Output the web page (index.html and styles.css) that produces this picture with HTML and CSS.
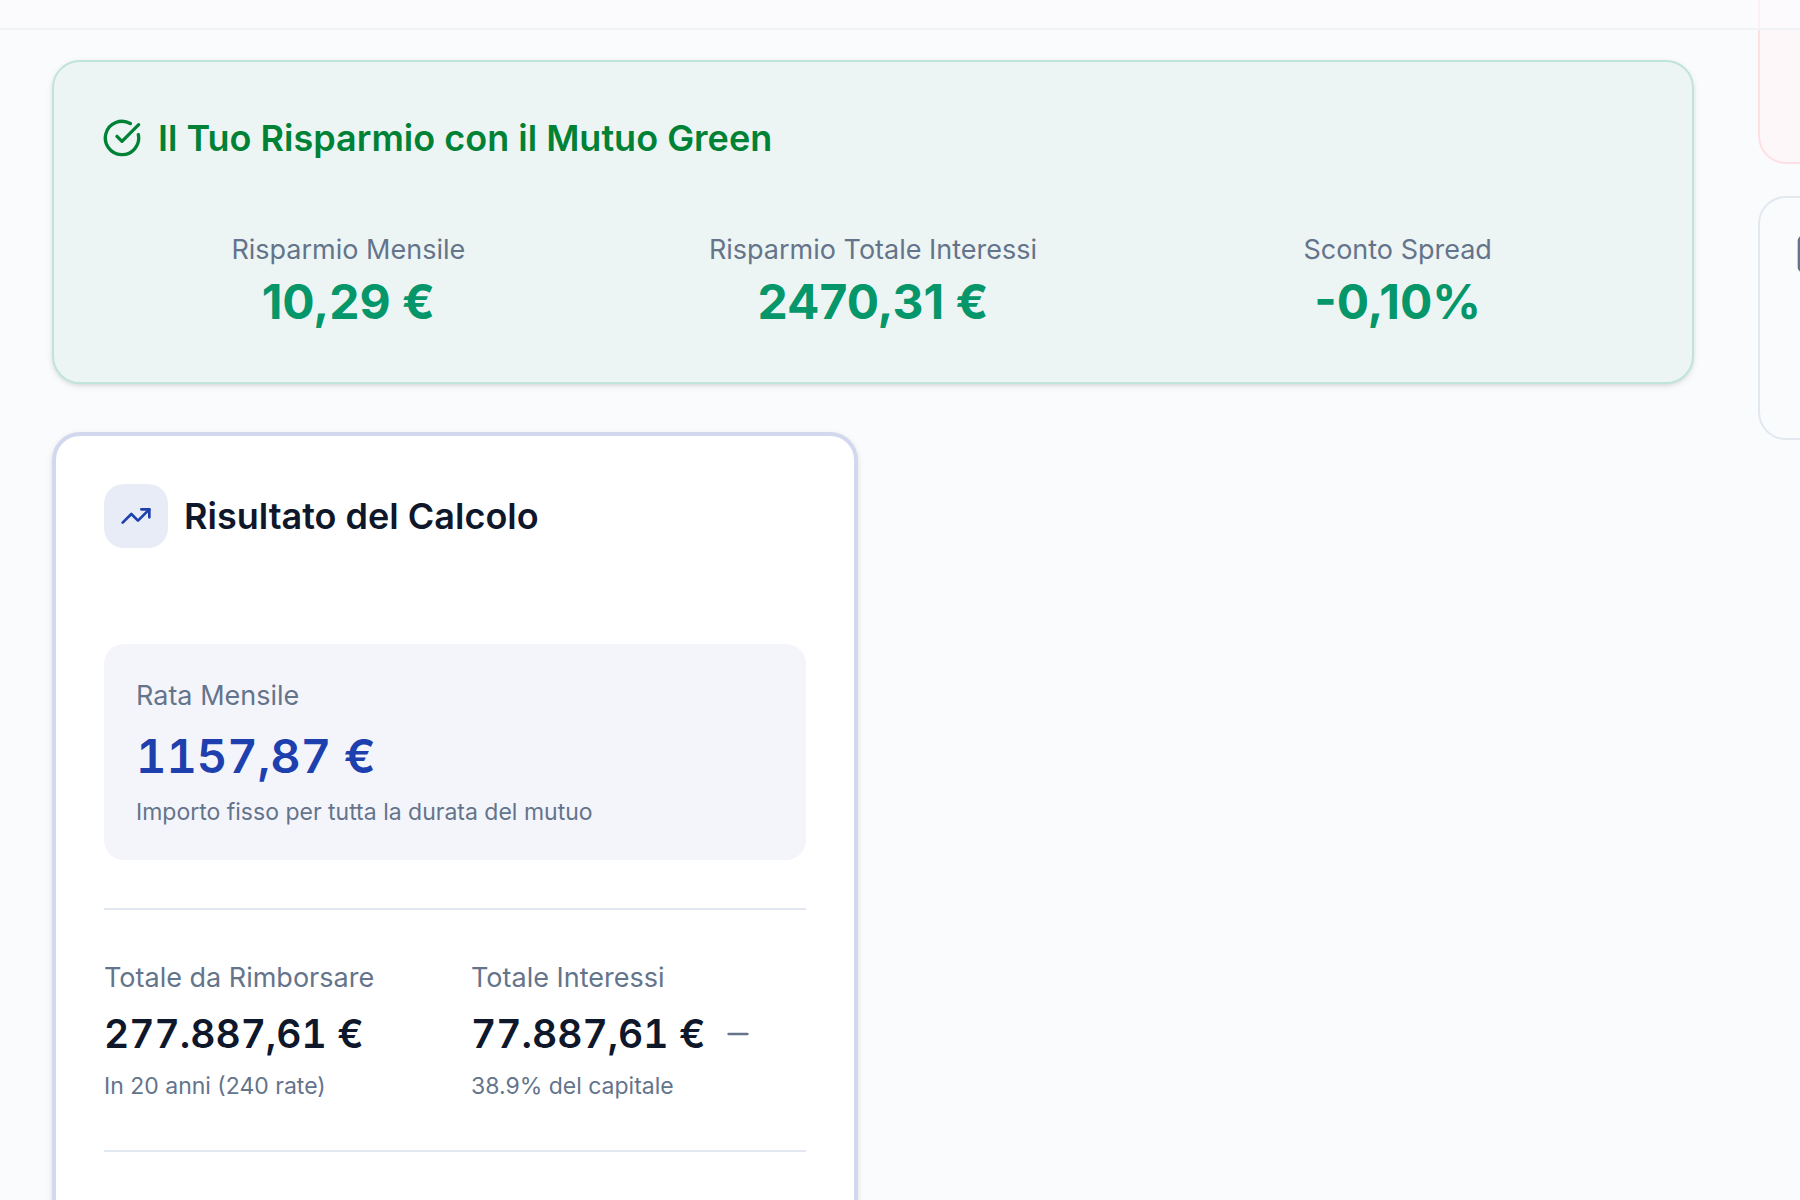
FILE: index.html
```html
<!DOCTYPE html>
<html lang="it">
<head>
    <meta charset="UTF-8">
    <meta name="viewport" content="width=device-width, initial-scale=1.0">
    <title>Calcolo Mutuo</title>
    <link rel="stylesheet" href="styles.css">
</head>
<body>
    <header class="topbar"></header>

    <div class="layout">
        <main class="content">
            <!-- Risparmio mutuo green -->
            <section class="card savings">
                <h2 class="card-title savings-title">
                    <svg class="icon-lg" viewBox="0 0 24 24" aria-hidden="true">
                        <path d="M21.801 10A10 10 0 1 1 17 3.335"/>
                        <path d="m9 11 3 3L22 4"/>
                    </svg>
                    Il Tuo Risparmio con il Mutuo Green
                </h2>
                <div class="savings-grid">
                    <div>
                        <p class="label">Risparmio Mensile</p>
                        <p class="saving">10,29 €</p>
                    </div>
                    <div>
                        <p class="label">Risparmio Totale Interessi</p>
                        <p class="saving">2470,31 €</p>
                    </div>
                    <div>
                        <p class="label">Sconto Spread</p>
                        <p class="saving">-0,10%</p>
                    </div>
                </div>
            </section>

            <!-- Risultato -->
            <div class="results">
                <section class="card result">
                    <h2 class="card-title">
                        <span class="badge">
                            <svg class="icon" viewBox="0 0 24 24" aria-hidden="true">
                                <path d="M16 7h6v6"/>
                                <path d="m22 7-8.5 8.5-5-5L2 17"/>
                            </svg>
                        </span>
                        Risultato del Calcolo
                    </h2>
                    <div class="payment">
                        <p class="label">Rata Mensile</p>
                        <p class="payment-value">1157,87 €</p>
                        <p class="note">Importo fisso per tutta la durata del mutuo</p>
                    </div>
                    <hr>
                    <div class="totals">
                        <div>
                            <p class="label">Totale da Rimborsare</p>
                            <p class="total">277.887,61 €</p>
                            <p class="note">In 20 anni (240 rate)</p>
                        </div>
                        <div>
                            <p class="label">Totale Interessi</p>
                            <p class="total">
                                77.887,61 €
                                <svg class="icon muted" viewBox="0 0 24 24" aria-hidden="true">
                                    <path d="M5 12h14"/>
                                </svg>
                            </p>
                            <p class="note">38.9% del capitale</p>
                        </div>
                    </div>
                    <hr>
                </section>
            </div>
        </main>

        <aside class="sidebar">
            <div class="side-card warning"></div>
            <div class="side-card info">
                <svg class="icon-lg muted" viewBox="0 0 24 24" aria-hidden="true">
                    <rect x="2" y="2" width="20" height="20" rx="2"/>
                </svg>
            </div>
        </aside>
    </div>
</body>
</html>
```

FILE: styles.css
```css
:root {
    --bg: #fafbfd;
    --text: #0f172a;
    --muted: #64748b;
    --border: #e2e8f0;
    --primary: #1e40af;
    --success: #059669;
}

* {
    box-sizing: border-box;
}

body {
    font-family: Inter, sans-serif;
    margin: 0;
    height: 100vh;
    overflow: hidden;
    background: var(--bg);
    color: var(--text);
}

h2,
p {
    margin: 0;
}

svg {
    flex: none;
    fill: none;
    stroke: currentColor;
    stroke-width: 2;
    stroke-linecap: round;
    stroke-linejoin: round;
}

hr {
    height: 2px;
    margin: 48px 0;
    border: none;
    background: var(--border);
}

.topbar {
    position: fixed;
    top: 0;
    left: 0;
    right: 0;
    height: 30px;
    background: rgba(251, 252, 253, 0.6);
    border-bottom: 2px solid #f0f2f6;
}

/* the sidebar runs past the right edge of the window */
.layout {
    display: grid;
    grid-template-columns: minmax(0, 1fr) 780px;
    gap: 64px;
    align-items: start;
    margin: 0 -738px 0 52px;
}

.content {
    display: grid;
    gap: 48px;
    padding-top: 60px;
}

.card {
    padding: 48px;
    border-radius: 28px;
    box-shadow: 0 2px 6px rgba(0, 0, 0, 0.1), 0 2px 4px -2px rgba(0, 0, 0, 0.1);
}

.card-title {
    display: flex;
    align-items: center;
    gap: 16px;
    font-size: 36px;
    font-weight: 600;
    line-height: 56px;
}

.savings {
    background: #edf5f4;
    border: 2px solid #bfe4da;
}

.savings-title {
    margin-bottom: 64px;
    color: #008236;
}

.savings-grid {
    display: grid;
    grid-template-columns: repeat(3, 1fr);
    gap: 32px;
    text-align: center;
}

.label {
    font-size: 27px;
    line-height: 40px;
    color: var(--muted);
}

.note {
    font-size: 23px;
    line-height: 32px;
    color: var(--muted);
}

.saving {
    font-size: 48px;
    font-weight: 700;
    line-height: 64px;
    color: var(--success);
}

.results {
    display: grid;
    grid-template-columns: repeat(2, minmax(0, 1fr));
    gap: 30px;
}

.result {
    padding-bottom: 96px;
    background: #fff;
    border: 4px solid #d2d9ef;
}

.badge {
    display: flex;
    padding: 16px;
    border-radius: 20px;
    background: #e8ecf7;
    color: var(--primary);
}

.icon {
    width: 32px;
    height: 32px;
}

.icon-lg {
    width: 40px;
    height: 40px;
}

.muted {
    color: var(--muted);
}

.payment {
    display: grid;
    gap: 8px;
    margin-top: 96px;
    padding: 32px;
    border-radius: 20px;
    background: #f4f5fb;
}

.payment-value {
    font-size: 47px;
    font-weight: 600;
    line-height: 64px;
    color: var(--primary);
    font-variant-numeric: tabular-nums;
}

.totals {
    display: grid;
    grid-template-columns: repeat(2, 1fr);
    gap: 32px;
}

.total {
    display: flex;
    align-items: center;
    gap: 16px;
    margin: 8px 0;
    font-size: 39px;
    font-weight: 600;
    line-height: 56px;
    font-variant-numeric: tabular-nums;
}

.sidebar {
    display: grid;
    gap: 32px;
}

.side-card {
    padding: 36px;
    border: 2px solid var(--border);
    border-radius: 28px;
}

.warning {
    height: 164px;
    border-color: #ffdfe2;
    border-top: none;
    border-radius: 0 0 28px 28px;
    background: #fdf7f9;
}

.info {
    height: 244px;
    background: #f9fbfc;
}
```
